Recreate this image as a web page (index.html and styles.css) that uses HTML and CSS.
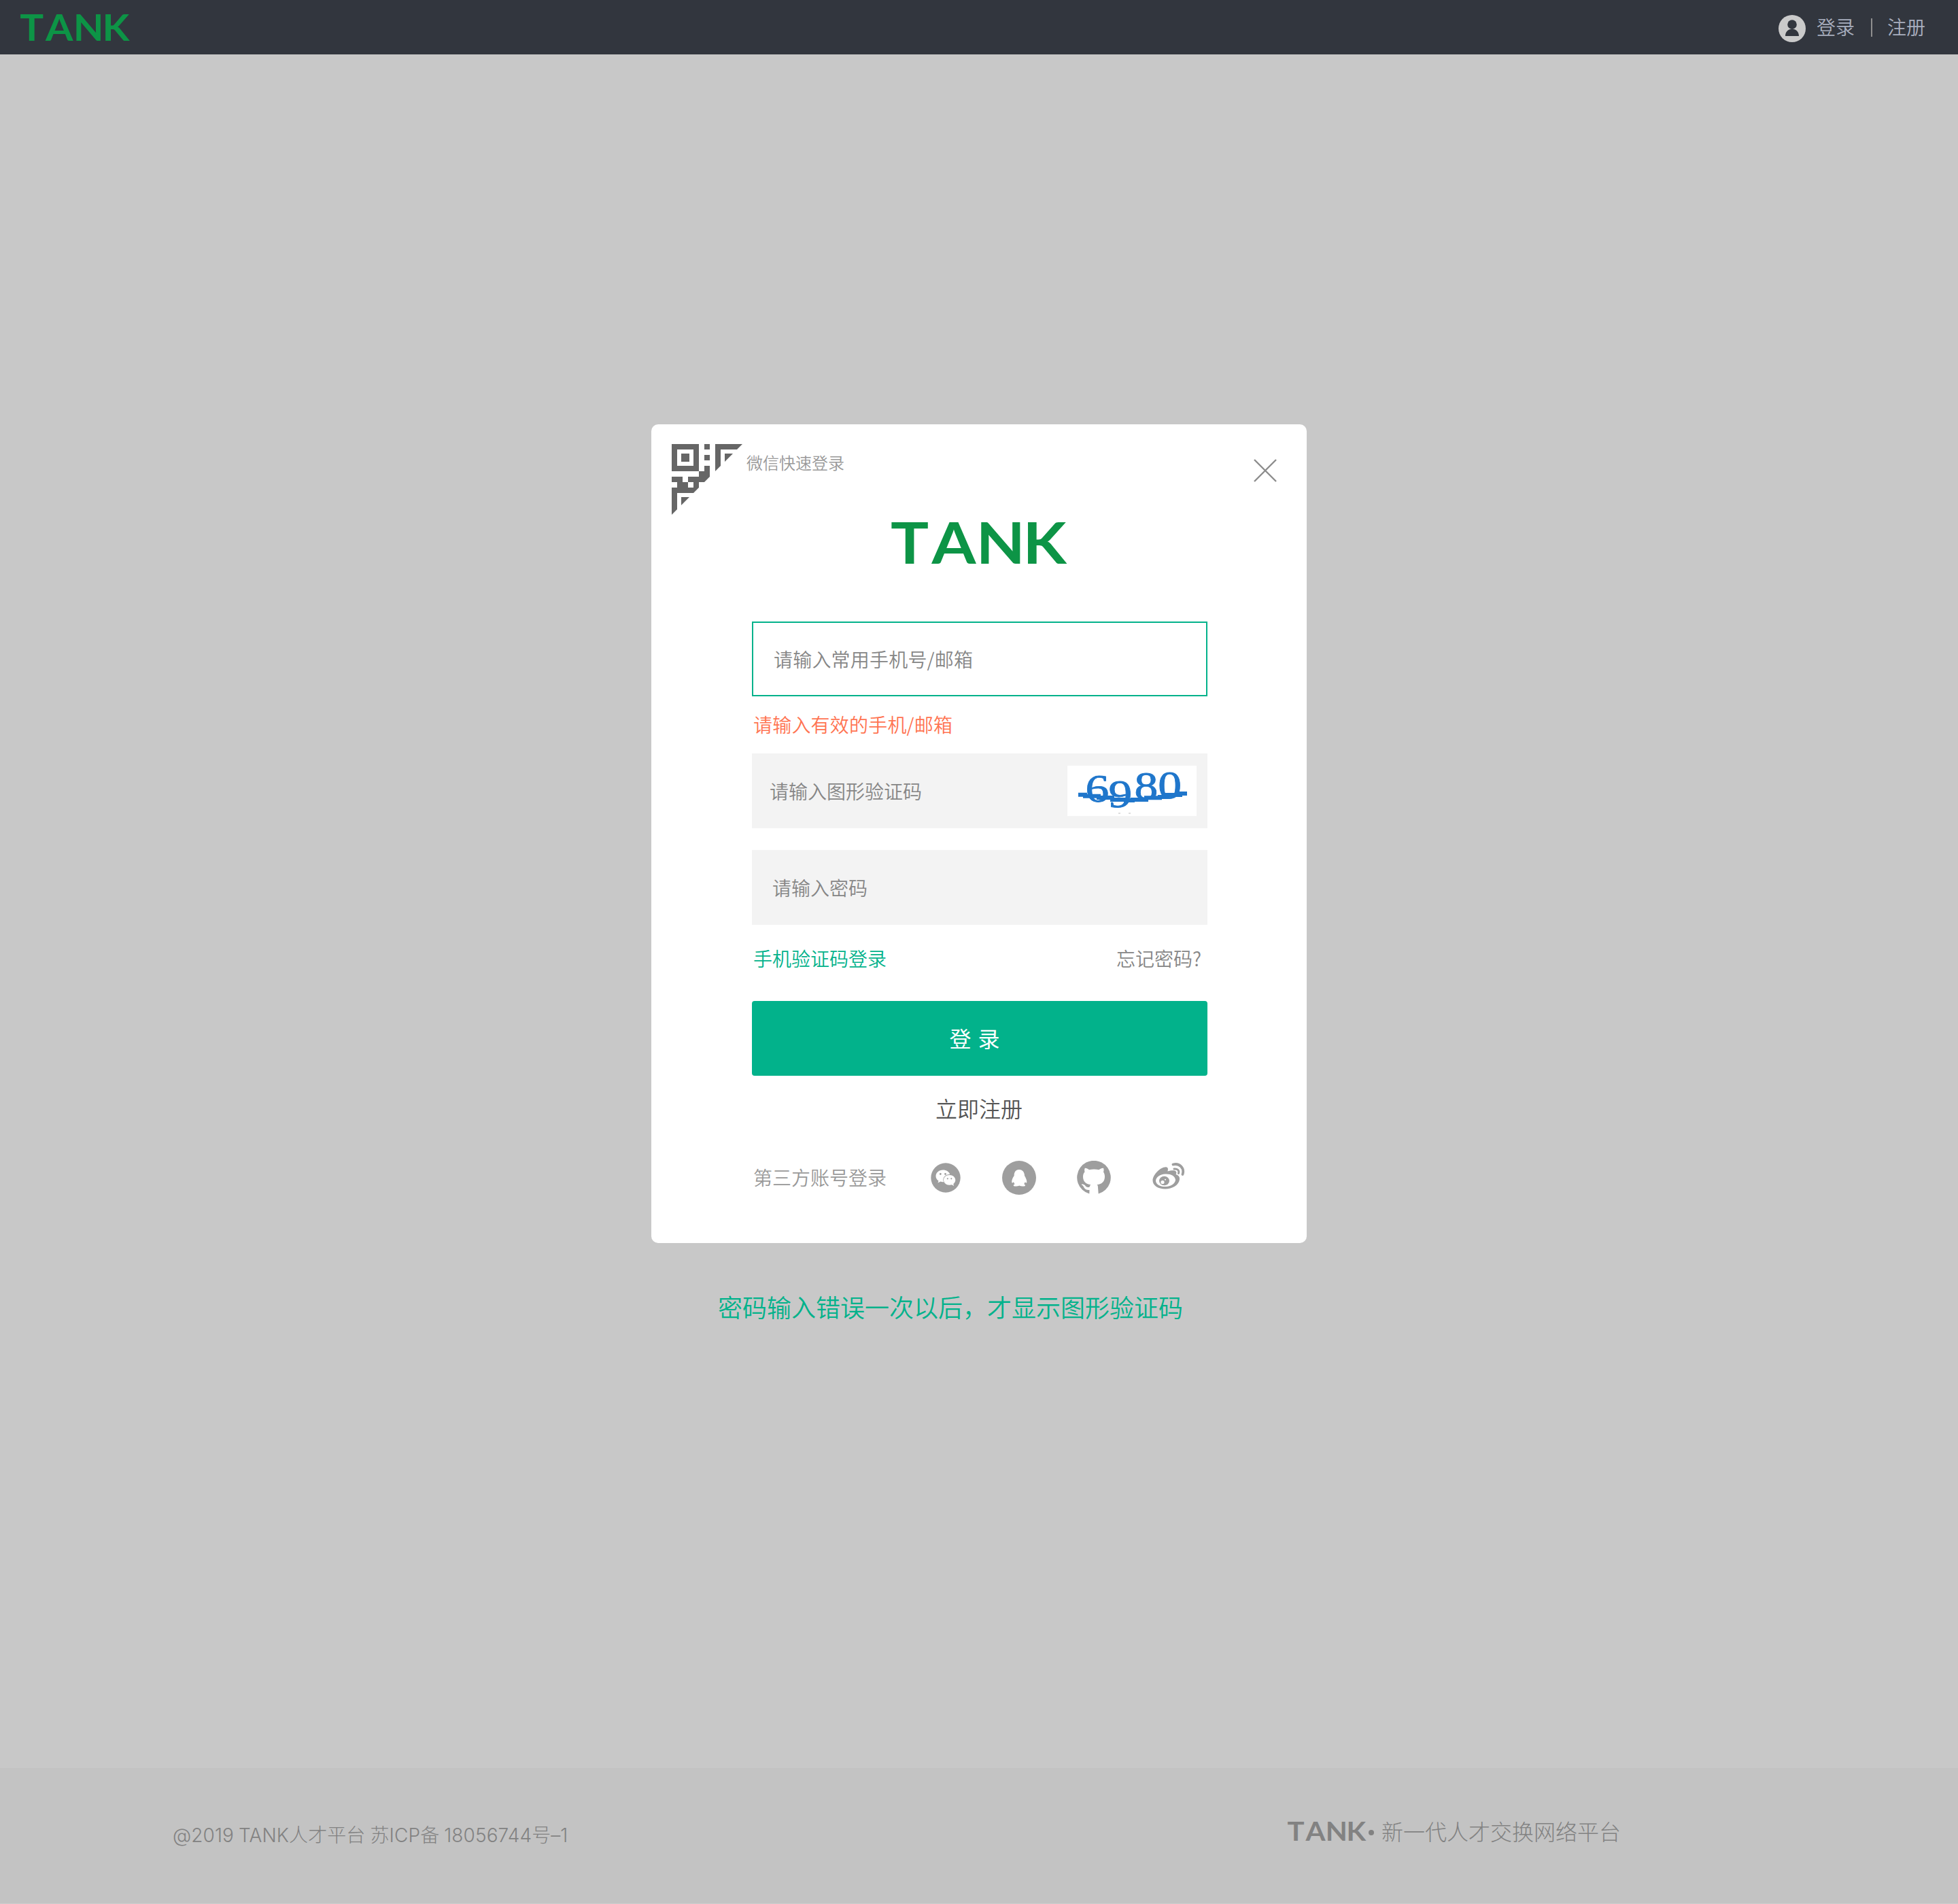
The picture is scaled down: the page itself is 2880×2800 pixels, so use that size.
FILE: index.html
```html
<!DOCTYPE html>
<html lang="zh-CN">
<head>
<meta charset="utf-8">
<title>TANK 登录</title>
<link rel="stylesheet" href="styles.css">
</head>
<body>
<div class="page">
  <header class="topbar">
    <svg class="logo logo-top" viewBox="0 0 262 64"><text class="wordmark-text" transform="scale(1.1 1)" x="-1 54 113.500 176" y="62">TANK</text></svg>
    <nav class="account">
      <svg class="avatar" viewBox="0 0 40 40"><circle cx="20" cy="20" r="20" fill="#cacaca"/><circle cx="20" cy="14" r="6.8" fill="#32363e"/><path d="M10 31C10 25 14 21.5 17.500 21L20 20L22.500 21C26 21.500 30 25 30 31Z" fill="#32363e"/></svg>
      <a>登录</a><i class="divider"></i><a>注册</a>
    </nav>
  </header>
  <main class="stage">
    <section class="dialog">
      <div class="dialog-head">
        <svg class="qr" viewBox="0 0 104 104" fill="#666"><path fill-rule="evenodd" d="M0 0H40V40H0ZM8 8V32H32V8ZM14 14H26V26H14Z"/><path d="M48 0H56V8H48ZM48 16H56V24H48ZM64 0H104L96 8H72V32L64 40ZM78 14H90L78 26Z"/><path fill-rule="evenodd" d="M40 40H48V32H56V48L48 56H40V64L32 72H8V96L0 104V64H8V56H0V48H16V56H24V48H40ZM24 56V64H32V56Z"/><path d="M14 78H26L14 90Z"/></svg>
        <span class="quick">微信快速登录</span>
        <svg class="close" viewBox="0 0 34 34"><path d="M1 1L33 33M33 1L1 33" stroke="#8c8c8c" stroke-width="2.400"/></svg>
      </div>
      <svg class="logo logo-main" viewBox="0 0 262 64"><text class="wordmark-text" transform="scale(1.1 1)" x="-1 54 113.500 176" y="62">TANK</text></svg>
      <form class="form">
        <div class="field field-active">请输入常用手机号/邮箱</div>
        <p class="error">请输入有效的手机/邮箱</p>
        <div class="field field-captcha"><span>请输入图形验证码</span>
          <svg class="captcha" viewBox="0 0 190 74"><rect width="190" height="74" fill="#fff"/><text class="captcha-text" transform="scale(1.2 1)" x="22 50.500 82 111" y="53 61 49 48">6980</text><path d="M16 42.700H26V44.700H46V47H66V50H86V51H96V50H116V47.300H136V46H146V43H166V41H176" fill="none" stroke="#1f76cb" stroke-width="6"/><path d="M75 70H78M90 70H93" stroke="#bbb" stroke-width="1"/></svg>
        </div>
        <div class="field field-password">请输入密码</div>
        <div class="links"><a class="sms">手机验证码登录</a><a>忘记密码?</a></div>
        <div class="submit">登 录</div>
        <a class="register">立即注册</a>
        <div class="social">
          <span>第三方账号登录</span>
          <svg class="wechat" viewBox="0 0 44 44"><circle cx="22" cy="22" r="21.700" fill="#9e9e9e"/><path fill="#fff" d="M18 10.500C12 10.500 7.500 14.500 7.500 19.500C7.500 22.500 9 25 11.500 26.500L10.500 29.500L14.500 27.500Q16.500 28.500 19 28.200C16.500 22 21.500 16.500 28.200 17C27 13 23 10.500 18 10.500Z"/><path fill="#fff" d="M27.500 18C22.500 18 19 21.200 19 25.300C19 29.500 22.700 32.800 27.500 32.800L31 32.200L34 34L33.300 31C35.300 29.500 36.300 27.500 36.300 25.300C36.300 21.200 32.500 18 27.500 18Z"/><g fill="#9e9e9e"><circle cx="14.300" cy="16.500" r="1.400"/><circle cx="21.500" cy="16.500" r="1.400"/><circle cx="24.800" cy="23.300" r="1.100"/><circle cx="30.300" cy="23.300" r="1.100"/></g></svg>
          <svg class="qq" viewBox="0 0 50 50"><circle cx="25" cy="25" r="25" fill="#9e9e9e"/><path fill="#fff" d="M25 13C19.500 13 17.500 17.500 17.700 22C15.500 25 14 28.500 14.200 31.500C14.500 33.500 15.500 32.500 17 31C17.200 32.500 18 33.500 18.800 34.300C17 35 16.300 36 17 36.900C18.500 38 23 37.600 25.300 36.500C28 37.600 32 38 33.700 36.900C34.500 36 33.700 35 32 34.300C33 33.300 33.500 32.300 33.800 31C35 32.500 36 33.500 36.300 31.500C36.500 28.500 35 25.500 33 22C33 17.500 30.500 13 25 13Z"/></svg>
          <svg class="github" viewBox="0 0 50 50"><path fill="#9e9e9e" d="M18.300 48.500A24.800 24.800 0 1 1 31.700 48.500L30.800 37C30.600 36 29.800 35.700 29.500 35.300C37 34.500 41 30 41 23.500C41 20 40 18 39 16.500C39.800 14.500 39.600 12 39 10.800C37 10.500 34.500 11.800 32.500 13.200Q25 11.800 18 13.200C16 11.800 13.500 10.500 11.800 10.800C11 12.500 11 14.500 11.500 16.500C10 18 9 20 9 23.500C9 30 13 34.500 20.500 35.300C19.500 36 19 37 18.700 38.500C15 40 13 38 12 36.300C10.500 34.500 8.500 34.300 7 34.500C6.500 35.300 7.500 35.600 8.500 36.300C10.500 38 10.500 43.500 18.500 43Z"/></svg>
          <svg class="weibo" viewBox="0 0 48 40"><path fill="#9e9e9e" fill-rule="evenodd" d="M20 6.300C24 7 23 10 22.500 12.500C27 11.500 32 10.500 34.500 12.500C36 14 35.500 15.500 34.500 17C38 18 40.500 20 40 24.500C39 33 29 38.500 19 38.500C8 38.500.5 33 .5 26C.5 18 11.500 6 20 6.300ZM19 16.500C11 17 5 21.500 5 26.500C5.300 32 12 35.500 20 35C28 34.500 34 30 34 25C33.500 19.500 27 16 19 16.500Z"/><ellipse cx="17.500" cy="26.500" rx="7.500" ry="6.800" fill="#9e9e9e"/><circle cx="15" cy="28.500" r="2.600" fill="#fff"/><circle cx="19" cy="24.800" r="1" fill="#fff"/><path d="M30.500 2.500C40 0 47.500 8 44.500 17" fill="none" stroke="#9e9e9e" stroke-width="3.800" stroke-linecap="round"/><path d="M32 9C37 8.500 40 11.500 38.500 15.500" fill="none" stroke="#9e9e9e" stroke-width="3" stroke-linecap="round"/></svg>
        </div>
      </form>
    </section>
    <p class="notice">密码输入错误一次以后，才显示图形验证码</p>
  </main>
  <footer class="footer">
    <span class="icp">@2019 TANK人才平台 苏ICP备 18056744号–1</span>
    <div class="brand"><svg class="logo logo-foot" viewBox="0 0 262 64"><text class="wordmark-text" transform="scale(1.1 1)" x="-1 54 113.500 176" y="62">TANK</text></svg><i class="dot"></i><span class="slogan">新一代人才交换网络平台</span></div>
  </footer>
</div>
</body>
</html>
```
FILE: styles.css
```css
* { box-sizing: border-box; }
html, body { height: 2800px; overflow: hidden; }
body { margin: 0; font-family: "Noto Sans CJK SC", sans-serif; font-weight: 350; font-size: 28px; line-height: 40px; }
p { margin: 0; }
svg { display: block; flex: none; }
.page { width: 2880px; height: 2800px; background: #c8c8c8; display: flex; flex-direction: column; overflow: hidden; }

.wordmark-text { font-family: Lato, sans-serif; font-weight: 700; font-size: 85px; fill: currentColor; }
.logo { color: #0d9446; overflow: visible; }
.logo-top { width: 163px; height: 40px; margin-top: 2px; }
.logo-main { width: 262px; height: 64px; margin: 26px 0 0 353px; }
.logo-foot { width: 117px; height: 29px; color: #828282; }

.topbar { height: 80px; flex: none; background: #32363e; display: flex; justify-content: space-between; align-items: center; padding: 0 48px 0 30px; color: #a9afbf; }
.account { display: flex; align-items: center; }
.account a { padding-bottom: 2px; }
.avatar { width: 40px; height: 40px; margin: 4px 16px 0 0; }
.divider { width: 2px; height: 27px; background: #8f8f8f; margin: 1px 22px 0 24px; }

.stage { flex: 1; display: flex; flex-direction: column; align-items: center; padding-top: 544px; }
.dialog { width: 964px; height: 1204px; flex: none; background: #fff; border-radius: 10px; padding-top: 29px; }
.dialog-head { display: flex; align-items: flex-start; padding: 0 44px 0 30px; height: 88px; }
.qr { width: 104px; height: 104px; }
.quick { font-size: 24px; margin: 7px 0 0 6px; color: #999; }
.close { width: 34px; height: 34px; margin: 22px 0 0 auto; }
.form { width: 670px; margin: 83px 0 0 148px; }
.field { height: 110px; background: #f3f3f3; color: #868686; display: flex; align-items: center; padding-left: 30px; }
.field-active { background: #fff; border: 2px solid #02b28b; letter-spacing: .2px; }
.field-captcha { justify-content: space-between; padding: 0 16px 0 26px; margin-bottom: 32px; }
.captcha { width: 190px; height: 74px; }
.captcha-text { font-family: "Liberation Serif", serif; font-size: 58px; fill: #1f76cb; stroke: #1f76cb; stroke-width: .8px; }
.error { color: #ff7452; padding: 21px 0 23px 2px; letter-spacing: .2px; }
.links { display: flex; justify-content: space-between; padding: 29px 9px 43px 2px; color: #868686; }
.sms { color: #02b28b; }
.submit { height: 110px; background: #02b28b; border-radius: 4px; color: #fff; font-size: 32px; font-weight: 400; display: flex; align-items: center; justify-content: center; padding: 0 15px 2px 0; word-spacing: 3px; }
.register { display: block; text-align: center; font-size: 32px; color: #555; margin-top: 27px; padding-right: 2px; }
.social { display: flex; align-items: center; color: #999; margin: 58px 0 0 2px; }
.social span { padding-bottom: 2px; }
.wechat { width: 44px; height: 44px; margin-left: 65px; }
.qq { width: 50px; height: 50px; margin-left: 61px; }
.github { width: 50px; height: 50px; margin-left: 60px; }
.weibo { width: 48px; height: 40px; margin: 0 0 4px 61px; }
.notice { align-self: flex-start; font-size: 36px; line-height: 50px; color: #02b28b; margin: 68px 0 0 1056px; }

.footer { height: 200px; flex: none; background: #c3c3c3; border-bottom: 1px solid #cecece; color: #828282; font-weight: 300; display: flex; justify-content: space-between; padding: 79px 496px 0 254px; }
.icp { font-family: Inter, "Noto Sans CJK SC", sans-serif; word-spacing: -1px; letter-spacing: .1px; }
.brand { display: flex; align-items: center; height: 28px; font-size: 32px; }
.slogan { padding-bottom: 2px; }
.dot { width: 8px; height: 8px; border-radius: 50%; background: currentColor; margin: 4px 11px 0 2px; }
```
